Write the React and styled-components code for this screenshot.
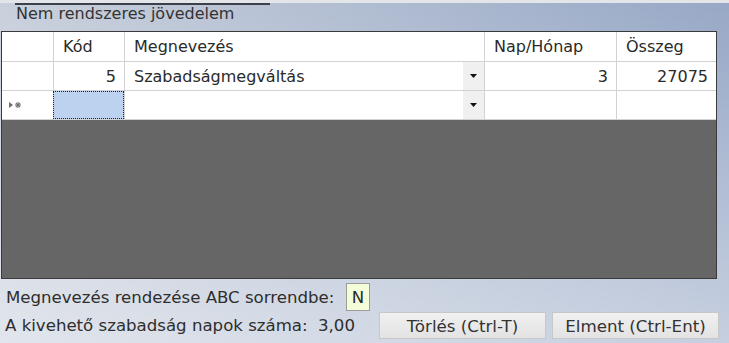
import React from "react";
import styled, { createGlobalStyle } from "styled-components";

const Global = createGlobalStyle`
  html, body { margin: 0; padding: 0; }
  body { font-family: "DejaVu Sans", Verdana, sans-serif; }
`;

const Page = styled.div`
  width: 729px;
  height: 343px;
  overflow: hidden;
  display: flex;
  flex-direction: column;
  background:
    linear-gradient(to bottom, rgba(255,255,255,0) 0%, rgba(255,255,255,0.45) 100%),
    linear-gradient(to right, #c9d0dc, #97a8c6);
  color: #2e2e2e;
  font-size: 16px;
`;

const TopStrip = styled.div`
  height: 3px;
  background: #e3e5e9;
`;

const Title = styled.div`
  margin-left: 15px;
  width: 254px;
  padding-left: 1px;
  border-top: 2px solid #3b404a;
  line-height: 18px;
  height: 18px;
  margin-bottom: 8px;
  color: #333;
  white-space: nowrap;
`;

const Grid = styled.div`
  margin-left: 1px;
  width: 714px;
  height: 246px;
  border: 1px solid #3a3a3a;
  background: #666666;
  display: flex;
  flex-direction: column;
`;

const Row = styled.div`
  display: grid;
  grid-template-columns: 51px 71px 360px 132px 1fr;
  box-sizing: border-box;
  height: ${(p) => p.$h}px;
  background: #ffffff;
  border-bottom: 1px solid #d2d2d2;
  flex: none;
`;

const Cell = styled.div`
  position: relative;
  display: flex;
  align-items: center;
  justify-content: ${(p) => (p.$right ? "flex-end" : "flex-start")};
  padding: 0 ${(p) => (p.$right ? "8px" : "0")} 0 ${(p) => (p.$right ? "0" : "9px")};
  border-left: ${(p) => (p.$first ? "none" : "1px solid #d2d2d2")};
  white-space: nowrap;
  color: #2a2a2a;
  background: ${(p) => (p.$selected ? "#bcd2ee" : "transparent")};
  outline: ${(p) => (p.$selected ? "1px dotted #222" : "none")};
  outline-offset: -1px;
`;

const DropButton = styled.div`
  position: absolute;
  right: 0;
  top: 0;
  bottom: 0;
  width: 21px;
  background: #f0f0f0;
  display: flex;
  align-items: center;
  justify-content: center;
`;

const Arrow = () => (
  <svg width="7" height="4" viewBox="0 0 7 4">
    <path d="M0 0 H7 L3.5 4 Z" fill="#111" />
  </svg>
);

const NewRowGlyph = () => (
  <svg width="13" height="8" viewBox="0 0 13 8" style={{ marginLeft: -2 }}>
    <path d="M0 1 L4 4 L0 7 Z" fill="#6e6e6e" />
    <g stroke="#6e6e6e" strokeWidth="1.1">
      <line x1="9" y1="1" x2="9" y2="7" />
      <line x1="6" y1="4" x2="12" y2="4" />
      <line x1="6.9" y1="1.9" x2="11.1" y2="6.1" />
      <line x1="11.1" y1="1.9" x2="6.9" y2="6.1" />
    </g>
  </svg>
);

const Empty = styled.div`
  flex: 1;
  background: #666666;
`;

const FooterRow = styled.div`
  display: flex;
  align-items: center;
  height: ${(p) => p.$h}px;
  margin-top: ${(p) => p.$mt}px;
  flex: none;
  font-size: 16.6px;
`;

const Label = styled.div`
  width: ${(p) => p.$w}px;
  padding-left: ${(p) => p.$pl}px;
  box-sizing: border-box;
  white-space: nowrap;
  color: #2e2e2e;
`;

const FlagBox = styled.div`
  width: 24px;
  height: 28px;
  box-sizing: border-box;
  border: 1px solid #9c9c9c;
  background: #f4fcd8;
  display: flex;
  align-items: center;
  justify-content: center;
  color: #2a2a2a;
`;

const Value = styled.div`
  width: 61px;
  white-space: nowrap;
  color: #2e2e2e;
`;

const Button = styled.button`
  width: 167px;
  height: 27px;
  box-sizing: border-box;
  margin-right: ${(p) => p.$mr || 0}px;
  border: 1px solid #c8c8c8;
  background: linear-gradient(to bottom, #f0f0f0, #e3e3e3);
  font-family: "DejaVu Sans", Verdana, sans-serif;
  font-size: 16.7px;
  color: #333;
  padding: 0;
  display: flex;
  align-items: center;
  justify-content: center;
  white-space: nowrap;
`;

export default function App() {
  return (
    <>
      <Global />
      <Page>
        <TopStrip />
        <Title>Nem rendszeres jövedelem</Title>
        <Grid>
          <Row $h={30}>
            <Cell $first />
            <Cell>Kód</Cell>
            <Cell>Megnevezés</Cell>
            <Cell>Nap/Hónap</Cell>
            <Cell>Összeg</Cell>
          </Row>
          <Row $h={29}>
            <Cell $first />
            <Cell $right>5</Cell>
            <Cell>
              Szabadságmegváltás
              <DropButton>
                <Arrow />
              </DropButton>
            </Cell>
            <Cell $right>3</Cell>
            <Cell $right>27075</Cell>
          </Row>
          <Row $h={29}>
            <Cell $first>
              <NewRowGlyph />
            </Cell>
            <Cell $selected />
            <Cell>
              <DropButton>
                <Arrow />
              </DropButton>
            </Cell>
            <Cell />
            <Cell />
          </Row>
          <Empty />
        </Grid>
        <FooterRow $h={28} $mt={4}>
          <Label $w={346} $pl={6}>
            Megnevezés rendezése ABC sorrendbe:
          </Label>
          <FlagBox>N</FlagBox>
        </FooterRow>
        <FooterRow $h={27} $mt={1}>
          <Label $w={318} $pl={5}>
            A kivehető szabadság napok száma:
          </Label>
          <Value>3,00</Value>
          <Button $mr={6}>Törlés (Ctrl-T)</Button>
          <Button>Elment (Ctrl-Ent)</Button>
        </FooterRow>
      </Page>
    </>
  );
}
